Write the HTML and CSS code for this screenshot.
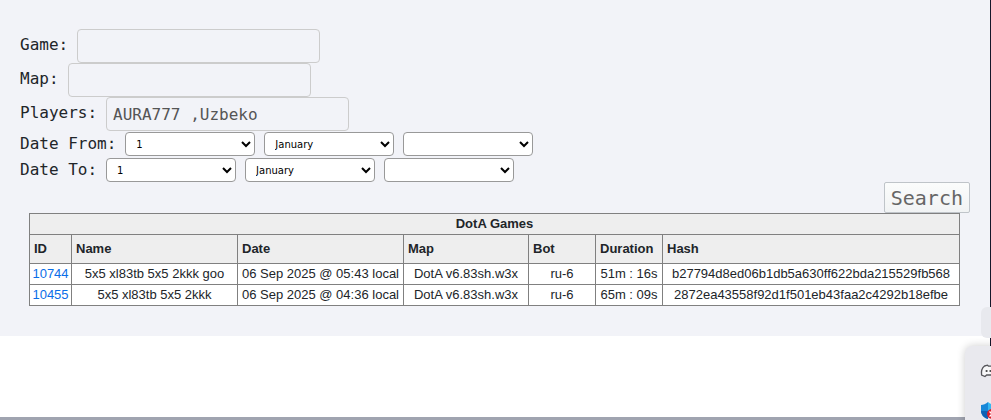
FILE: index.html
```html
<!DOCTYPE html>
<html lang="en">
<head>
    <meta charset="UTF-8">
    <meta name="viewport" content="width=device-width, initial-scale=1.0">
    <title>DotA Games</title>
    <link rel="stylesheet" href="styles.css">
</head>
<body>
    <main class="panel">
        <form class="search-form">
            <div class="row">
                <label for="game">Game:</label>
                <input type="text" id="game" name="game">
            </div>
            <div class="row">
                <label for="map">Map:</label>
                <input type="text" id="map" name="map">
            </div>
            <div class="row">
                <label for="players">Players:</label>
                <input type="text" id="players" name="players" value="AURA777 ,Uzbeko">
            </div>
            <div class="row date-row">
                <label for="fromDay">Date From:</label>
                <select id="fromDay" name="fromDay"><option>1</option></select>
                <select name="fromMonth" aria-label="From month"><option>January</option></select>
                <select name="fromYear" aria-label="From year"><option></option></select>
            </div>
            <div class="row date-row">
                <label for="toDay">Date To:</label>
                <select id="toDay" name="toDay"><option>1</option></select>
                <select name="toMonth" aria-label="To month"><option>January</option></select>
                <select name="toYear" aria-label="To year"><option></option></select>
            </div>
            <button type="submit" class="search-button">Search</button>
        </form>

        <table class="games">
            <colgroup>
                <col class="col-id">
                <col class="col-name">
                <col class="col-date">
                <col class="col-map">
                <col class="col-bot">
                <col class="col-duration">
                <col class="col-hash">
            </colgroup>
            <thead>
                <tr>
                    <th colspan="7" class="title">DotA Games</th>
                </tr>
                <tr class="heads">
                    <th>ID</th>
                    <th>Name</th>
                    <th>Date</th>
                    <th>Map</th>
                    <th>Bot</th>
                    <th>Duration</th>
                    <th>Hash</th>
                </tr>
            </thead>
            <tbody>
                <tr>
                    <td><a href="#10744">10744</a></td>
                    <td>5x5 xl83tb 5x5 2kkk goo</td>
                    <td>06 Sep 2025 @ 05:43 local</td>
                    <td>DotA v6.83sh.w3x</td>
                    <td>ru-6</td>
                    <td>51m : 16s</td>
                    <td>b27794d8ed06b1db5a630ff622bda215529fb568</td>
                </tr>
                <tr>
                    <td><a href="#10455">10455</a></td>
                    <td>5x5 xl83tb 5x5 2kkk</td>
                    <td>06 Sep 2025 @ 04:36 local</td>
                    <td>DotA v6.83sh.w3x</td>
                    <td>ru-6</td>
                    <td>65m : 09s</td>
                    <td>2872ea43558f92d1f501eb43faa2c4292b18efbe</td>
                </tr>
            </tbody>
        </table>
    </main>
    <div class="bottom-bar"></div>

    <div class="edge"></div>
    <div class="tooltip"></div>
    <div class="tray">
        <svg width="20" height="16" viewBox="0 0 20 16">
            <path d="M4.5 3 L7.5 2.2 L8.5 3.2 H11.5 L12.5 2.2 L15.5 3 C18 5 19 8 18.6 11 L15 13.5 L13.3 12 H6.7 L5 13.5 L1.6 12 C1 8 2 5 4.5 3 Z" fill="#f7f7f8" stroke="#55555a" stroke-width="1.3"/>
            <circle cx="6.6" cy="8" r="1.1" fill="#444"/>
            <circle cx="10.4" cy="8" r="1.1" fill="#444"/>
        </svg>
        <svg width="20" height="18" viewBox="0 0 20 18">
            <path d="M8 0 C6 2 3 3 1 3 V9 C1 13 4 16 8 17 Z" fill="#1787d8"/>
            <path d="M8 0 C10 2 13 3 15 3 V9 H8 Z" fill="#35b8f1"/>
            <path d="M1 9 H8 V17 C4 16 1.5 13 1 9 Z" fill="#0f62b5"/>
            <circle cx="12" cy="12" r="5" fill="#d9202c"/>
            <path d="M9.5 9.5 L14.5 14.5 M14.5 9.5 L9.5 14.5" stroke="#fff" stroke-width="1.4"/>
        </svg>
    </div>
</body>
</html>
```

FILE: styles.css
```css
* {
    box-sizing: border-box;
}

body {
    display: flex;
    flex-direction: column;
    min-height: 100vh;
    margin: 0;
    background-color: #fff;
    color: #212529;
    font-family: "DejaVu Sans Mono", monospace;
    font-size: 16px;
    overflow: hidden;
}

.panel {
    padding: 29px 21px 30px 20px;
    background-color: #f2f3f8;
}

.search-form {
    display: flex;
    flex-direction: column;
}

.row {
    display: flex;
    gap: 9px;
    height: 34px;
}

.row label {
    line-height: 32px;
}

.row input {
    width: 243px;
    height: 34px;
    padding: 2px 6px;
    border: 1px solid #ccc;
    border-radius: 4px;
    background-color: transparent;
    color: #555;
    font: inherit;
}

.date-row {
    align-items: center;
    height: 26px;
}

.date-row label {
    line-height: 26px;
}

.date-row select {
    width: 130px;
    height: 24px;
    padding: 0 6px;
    border: 1px solid #999;
    border-radius: 4px;
    background-color: #fff;
    color: #000;
    font-family: "DejaVu Sans", sans-serif;
    font-size: 10px;
}

.search-button {
    align-self: flex-end;
    height: 31px;
    margin-top: -1px;
    padding: 0 6px;
    border: 1px solid #bfc4c9;
    border-radius: 2px;
    background: linear-gradient(#fbfcfc, #f1f3f4);
    color: #666;
    font-family: "DejaVu Sans Mono", monospace;
    font-size: 20px;
    line-height: 28px;
}

.games {
    width: calc(100% - 19px);
    margin-left: 9px;
    border-collapse: collapse;
    table-layout: fixed;
    background-color: #fff;
    font-family: "Liberation Sans", Arial, sans-serif;
    font-size: 13px;
    line-height: 18px;
    white-space: nowrap;
}

.games th,
.games td {
    height: 21px;
    padding: 0 0 1px;
    border: 1px solid #808080;
    text-align: center;
}

.games th {
    background-color: #eee;
}

.games .heads th {
    height: 29px;
    padding-left: 4px;
    text-align: left;
}

.games a {
    color: #0a6ee8;
    text-decoration: none;
}

.col-id {
    width: 42px;
}

.col-name {
    width: 166px;
}

.col-date {
    width: 166px;
}

.col-map {
    width: 125px;
}

.col-bot {
    width: 67px;
}

.col-duration {
    width: 67px;
}

.bottom-bar {
    height: 3px;
    margin-top: auto;
    background-color: #a0a4b0;
}

/* floating pieces over the right edge */
.edge {
    position: absolute;
    top: 0;
    right: 0;
    width: 1px;
    height: 347px;
    background-color: #15172a;
}

.tooltip {
    position: absolute;
    top: 307px;
    right: -20px;
    width: 30px;
    height: 31px;
    border-radius: 6px;
    background-color: #e8e9ee;
}

.tray {
    position: absolute;
    right: -20px;
    bottom: -10px;
    display: flex;
    flex-direction: column;
    gap: 23px;
    width: 46px;
    height: 84px;
    padding: 17px 0 0 15px;
    border-radius: 8px;
    background-color: #e9e9ee;
    box-shadow: 0 0 8px rgba(0, 0, 0, 0.2);
}
```
